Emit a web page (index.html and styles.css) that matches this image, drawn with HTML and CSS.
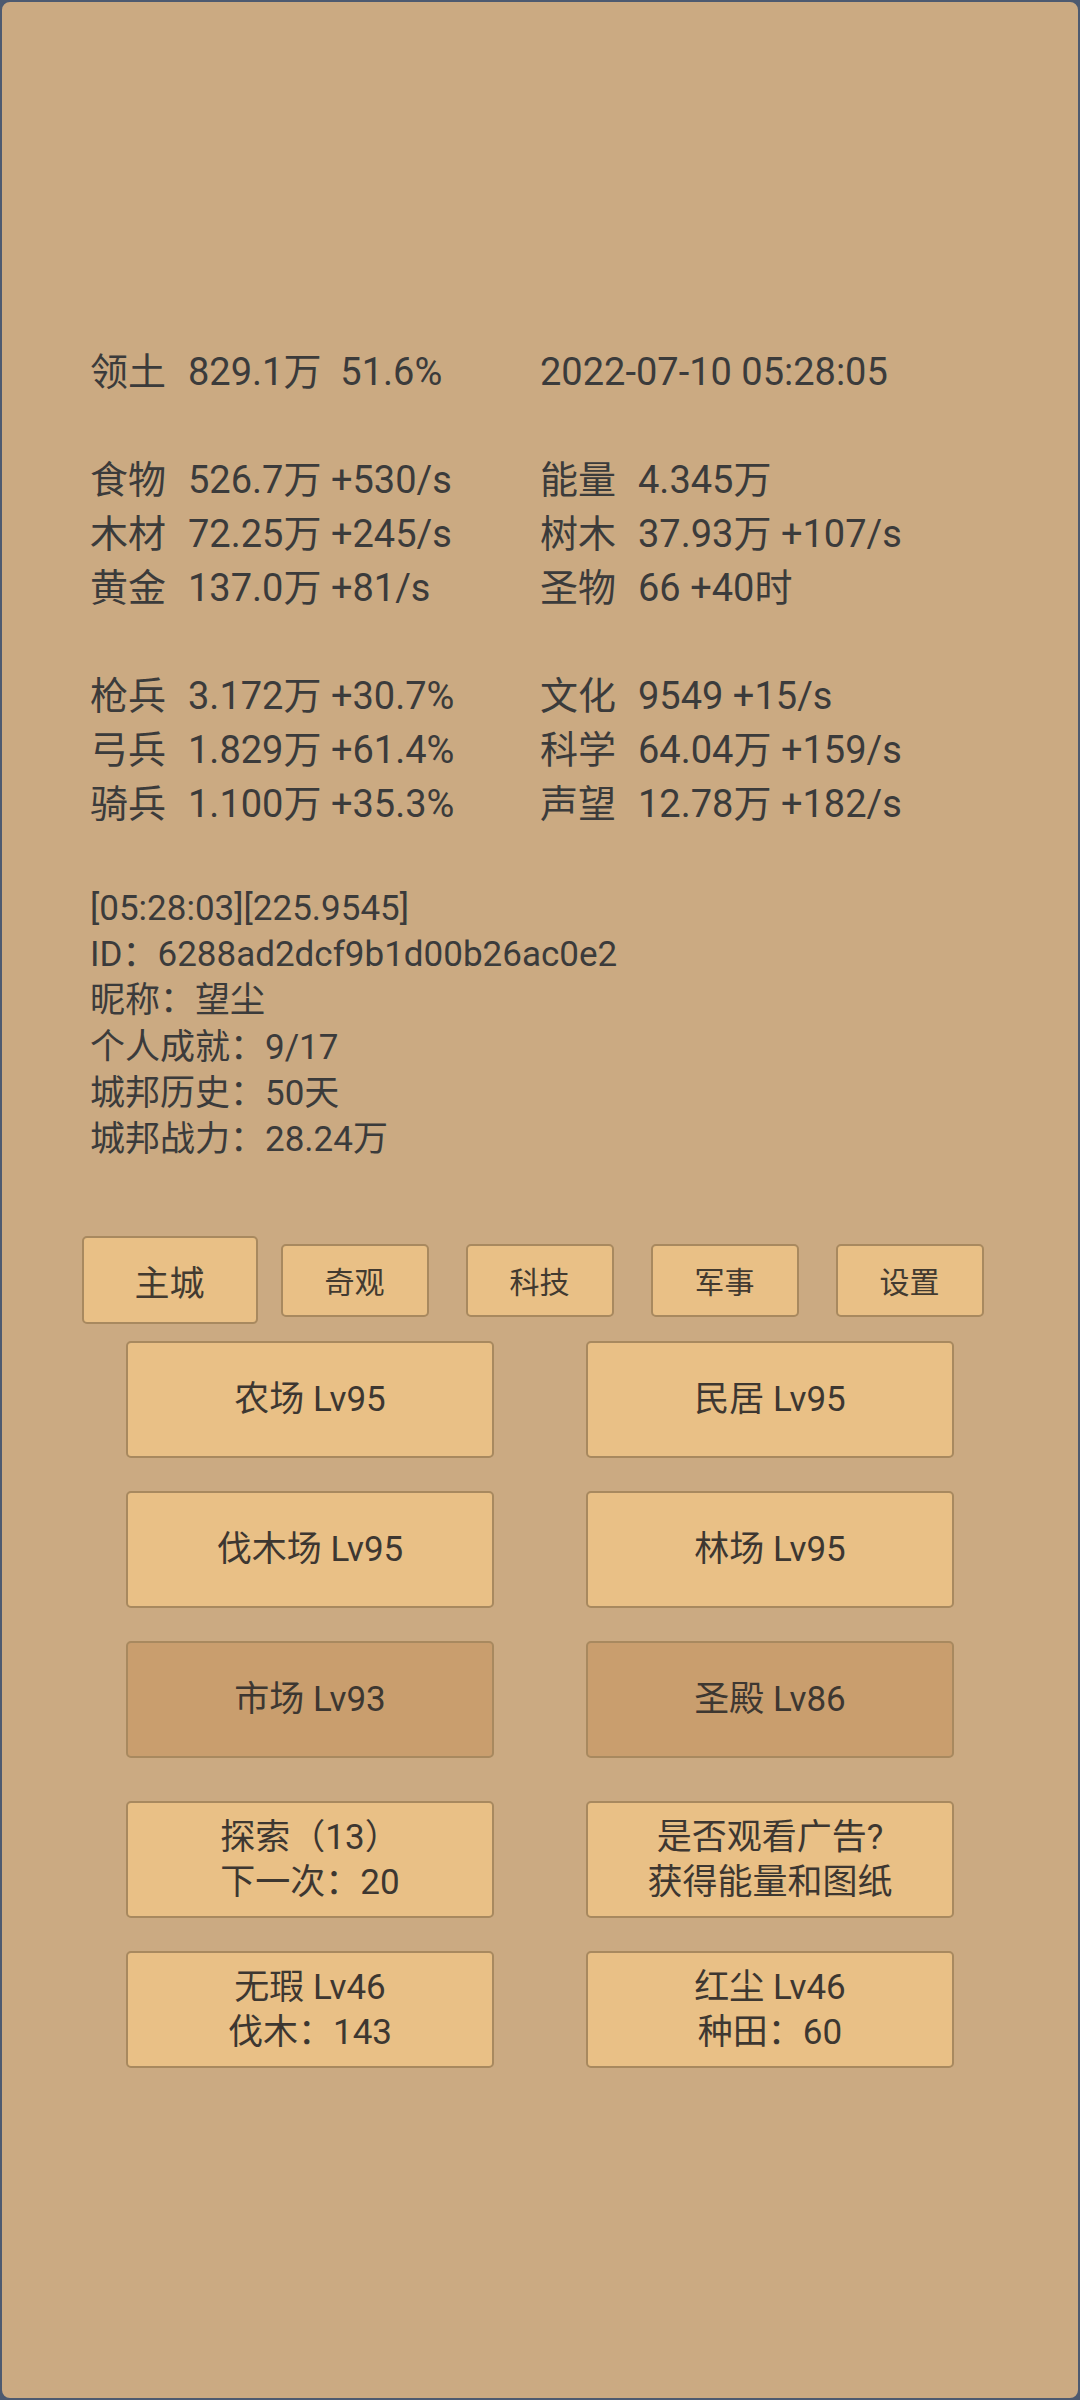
FILE: index.html
```html
<!DOCTYPE html>
<html lang="zh-CN">
<head>
  <meta charset="UTF-8">
  <title>城邦</title>
  <link rel="stylesheet" href="styles.css">
</head>
<body>
  <div class="screen">

    <div class="stats">
      <div class="stat"><span class="label">领土</span>829.1万  51.6%</div>
      <div class="stat">2022-07-10 05:28:05</div>
    </div>

    <div class="stats group">
      <div class="stat"><span class="label">食物</span>526.7万 +530/s</div>
      <div class="stat"><span class="label">能量</span>4.345万</div>
      <div class="stat"><span class="label">木材</span>72.25万 +245/s</div>
      <div class="stat"><span class="label">树木</span>37.93万 +107/s</div>
      <div class="stat"><span class="label">黄金</span>137.0万 +81/s</div>
      <div class="stat"><span class="label">圣物</span>66 +40时</div>
    </div>

    <div class="stats group">
      <div class="stat"><span class="label">枪兵</span>3.172万 +30.7%</div>
      <div class="stat"><span class="label">文化</span>9549 +15/s</div>
      <div class="stat"><span class="label">弓兵</span>1.829万 +61.4%</div>
      <div class="stat"><span class="label">科学</span>64.04万 +159/s</div>
      <div class="stat"><span class="label">骑兵</span>1.100万 +35.3%</div>
      <div class="stat"><span class="label">声望</span>12.78万 +182/s</div>
    </div>

    <div class="info">
      <div>[05:28:03][225.9545]</div>
      <div>ID：6288ad2dcf9b1d00b26ac0e2</div>
      <div>昵称：望尘</div>
      <div>个人成就：9/17</div>
      <div>城邦历史：50天</div>
      <div>城邦战力：28.24万</div>
    </div>

    <div class="tabs">
      <div class="tab active">主城</div>
      <div class="tab">奇观</div>
      <div class="tab">科技</div>
      <div class="tab">军事</div>
      <div class="tab">设置</div>
    </div>

    <div class="buttons">
      <div class="btn">农场 Lv95</div>
      <div class="btn">民居 Lv95</div>
      <div class="btn">伐木场 Lv95</div>
      <div class="btn">林场 Lv95</div>
      <div class="btn dark">市场 Lv93</div>
      <div class="btn dark">圣殿 Lv86</div>
    </div>

    <div class="buttons actions">
      <div class="btn">探索（13）<br>下一次：20</div>
      <div class="btn">是否观看广告?<br>获得能量和图纸</div>
      <div class="btn">无瑕 Lv46<br>伐木：143</div>
      <div class="btn">红尘 Lv46<br>种田：60</div>
    </div>

  </div>
</body>
</html>
```

FILE: styles.css
```css
body {
  margin: 0;
  background: #4d5a70;
  font-family: Roboto, "Noto Sans CJK SC", sans-serif;
  color: #3b3b3b;
}

.screen {
  height: 2400px;
  box-sizing: border-box;
  border: 2px solid #4d5a70;
  border-radius: 10px;
  background: #cbaa82;
  padding-top: 343px;
}

.stats {
  display: grid;
  grid-template-columns: 450px 450px;
  margin-left: 88px;
  font-size: 38px;
  line-height: 54px;
  white-space: pre;
}

.stats.group {
  margin-top: 54px;
}

.label {
  margin-right: 22px;
}

.info {
  margin: 55px 0 0 88px;
  font-size: 35px;
  line-height: 46.2px;
}

.tabs {
  display: grid;
  grid-template-columns: repeat(5, 185px);
  align-items: center;
  justify-items: center;
  height: 88px;
  margin: 73px 0 0 75px;
}

.tab {
  width: 148px;
  height: 73px;
  box-sizing: border-box;
  display: flex;
  align-items: center;
  justify-content: center;
  background: #e9c086;
  border: 2px solid #a8895f;
  border-radius: 5px;
  font-size: 30px;
  color: #423a30;
}

.tab.active {
  width: 176px;
  height: 88px;
  font-size: 35px;
}

.buttons {
  display: grid;
  grid-template-columns: 368px 368px;
  column-gap: 92px;
  row-gap: 33px;
  margin: 17px 0 0 124px;
}

.buttons.actions {
  margin-top: 43px;
}

.btn {
  height: 117px;
  box-sizing: border-box;
  display: flex;
  align-items: center;
  justify-content: center;
  text-align: center;
  background: #e9c086;
  border: 2px solid #a8895f;
  border-radius: 5px;
  font-size: 35px;
  line-height: 45px;
  color: #3d3731;
}

.btn.dark {
  background: #c99e6e;
}
```
